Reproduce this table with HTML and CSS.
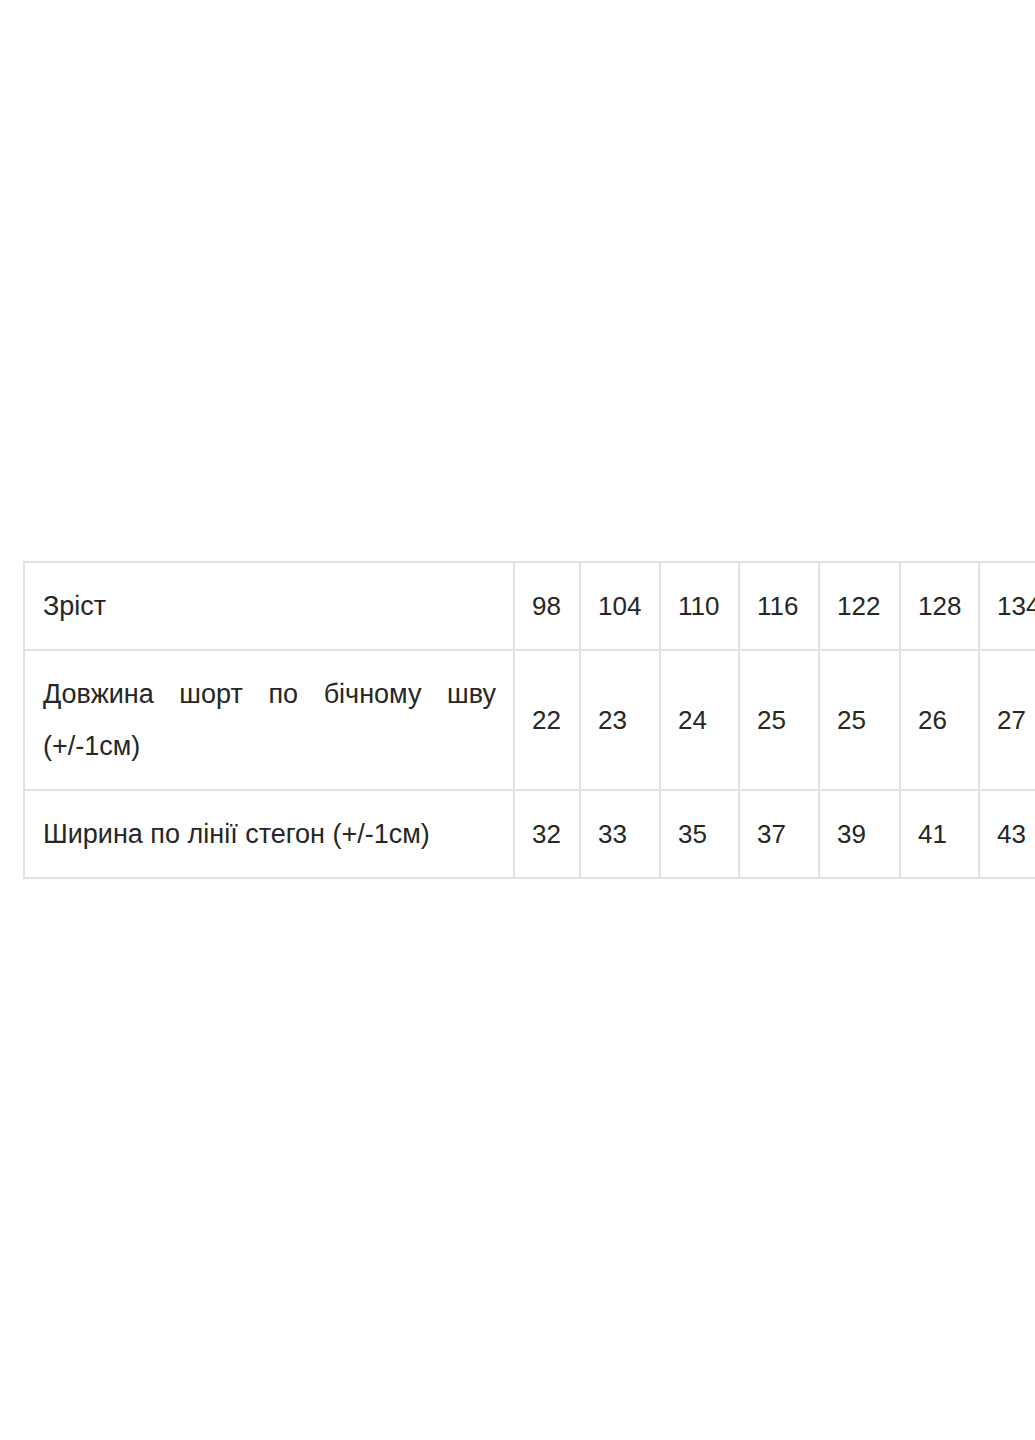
FILE: index.html
```html
<!DOCTYPE html>
<html lang="uk">
<head>
<meta charset="utf-8">
<title>Розмірна сітка</title>
<link rel="stylesheet" href="styles.css">
</head>
<body>
<main class="page">
  <table class="size-table">
    <colgroup>
      <col class="col-label">
      <col class="col-98">
      <col class="col-104">
      <col class="col-110">
      <col class="col-116">
      <col class="col-122">
      <col class="col-128">
      <col class="col-134">
    </colgroup>
    <tbody>
      <tr>
        <td class="label">Зріст</td>
        <td>98</td><td>104</td><td>110</td><td>116</td><td>122</td><td>128</td><td>134</td>
      </tr>
      <tr>
        <td class="label">Довжина шорт по бічному шву (+/-1см)</td>
        <td>22</td><td>23</td><td>24</td><td>25</td><td>25</td><td>26</td><td>27</td>
      </tr>
      <tr>
        <td class="label">Ширина по лінії стегон (+/-1см)</td>
        <td>32</td><td>33</td><td>35</td><td>37</td><td>39</td><td>41</td><td>43</td>
      </tr>
    </tbody>
  </table>
</main>
</body>
</html>
```
FILE: styles.css
```css
html, body {
  margin: 0;
  padding: 0;
  background: #ffffff;
  overflow: hidden;
}

.page {
  min-height: 1440px;
  display: flex;
  align-items: center;
  padding-left: 23px;
  box-sizing: border-box;
  width: 1200px;
}

.size-table {
  border-collapse: collapse;
  table-layout: fixed;
  width: 1035px;
  font-family: "Liberation Sans", Arial, sans-serif;
  font-size: 26px;
  line-height: 52px;
  color: #262626;
}

.col-label { width: 490px; }
.col-98 { width: 66px; }
.col-104 { width: 80px; }
.col-110 { width: 79px; }
.col-116 { width: 80px; }
.col-122 { width: 81px; }
.col-128 { width: 79px; }
.col-134 { width: 80px; }

.size-table td {
  border: 2px solid #e1e1e1;
  padding: 17px 16px 17px 17px;
  vertical-align: middle;
  white-space: nowrap;
}

.size-table td.label {
  font-size: 27px;
  white-space: normal;
  text-align: justify;
  padding-left: 18px;
  padding-right: 17px;
}
```
